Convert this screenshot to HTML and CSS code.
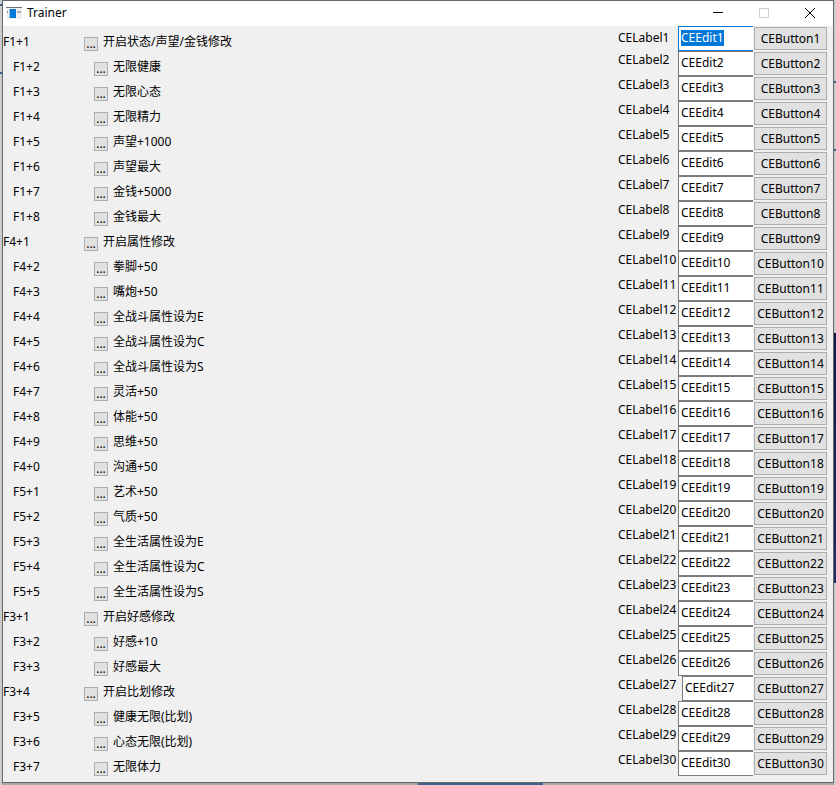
FILE: index.html
```html
<!DOCTYPE html>
<html lang="zh-CN">
<head>
  <meta charset="UTF-8" />
  <meta name="viewport" content="width=device-width, initial-scale=1.0"/>
  <title>Trainer</title>

  <link rel="stylesheet" href="styles.css">
</head>
<body>
  <main class="window">
    <header class="title-bar">
      <svg class="app-icon" width="16" height="12" viewBox="0 0 16 12" aria-hidden="true">
        <rect width="16" height="12" fill="#f0f0f0"/>
        <rect width="16" height="1" fill="#707070"/>
        <rect x="1" y="4" width="1" height="2" fill="#909090"/>
        <rect x="4" y="2" width="6" height="9" fill="#0078d7"/>
        <rect x="3" y="2" width="1" height="9" fill="#8cc4f0"/>
        <rect x="11" y="4" width="4" height="2" fill="#b0b0b0"/>
      </svg>
      <h1>Trainer</h1>
      <div class="window-buttons">
        <button type="button" aria-label="Minimize">
          <svg width="10" height="10" viewBox="0 0 10 10"><path d="M0 4.5H10" stroke="#000"/></svg>
        </button>
        <button type="button" aria-label="Maximize" disabled>
          <svg width="10" height="10" viewBox="0 0 10 10"><path d="M.5 .5H9.5V9.5H.5Z" fill="none" stroke="#ccc"/></svg>
        </button>
        <button type="button" aria-label="Close">
          <svg width="10" height="10" viewBox="0 0 10 10"><path d="M0 0L10 10M10 0L0 10" stroke="#000"/></svg>
        </button>
      </div>
    </header>

    <div class="content">
      <ul class="cheats" id="cheats"></ul>
      <div class="controls" id="controls"></div>
    </div>
  </main>

  <script>
    const groups = [
      {
        key: "F1+1",
        name: "开启状态/声望/金钱修改",
        items: [
          ["F1+2", "无限健康"],
          ["F1+3", "无限心态"],
          ["F1+4", "无限精力"],
          ["F1+5", "声望+1000"],
          ["F1+6", "声望最大"],
          ["F1+7", "金钱+5000"],
          ["F1+8", "金钱最大"]
        ]
      },
      {
        key: "F4+1",
        name: "开启属性修改",
        items: [
          ["F4+2", "拳脚+50"],
          ["F4+3", "嘴炮+50"],
          ["F4+4", "全战斗属性设为E"],
          ["F4+5", "全战斗属性设为C"],
          ["F4+6", "全战斗属性设为S"],
          ["F4+7", "灵活+50"],
          ["F4+8", "体能+50"],
          ["F4+9", "思维+50"],
          ["F4+0", "沟通+50"],
          ["F5+1", "艺术+50"],
          ["F5+2", "气质+50"],
          ["F5+3", "全生活属性设为E"],
          ["F5+4", "全生活属性设为C"],
          ["F5+5", "全生活属性设为S"]
        ]
      },
      {
        key: "F3+1",
        name: "开启好感修改",
        items: [
          ["F3+2", "好感+10"],
          ["F3+3", "好感最大"]
        ]
      },
      {
        key: "F3+4",
        name: "开启比划修改",
        items: [
          ["F3+5", "健康无限(比划)"],
          ["F3+6", "心态无限(比划)"],
          ["F3+7", "无限体力"]
        ]
      }
    ];

    function addCheat(key, name, className) {
      const row = document.createElement("li");
      row.className = className;
      row.innerHTML = `
        <span class="hotkey">${key}</span>
        <button type="button" class="more" aria-label="${name}">...</button>
        <span class="name">${name}</span>
      `;
      document.getElementById("cheats").appendChild(row);
    }

    groups.forEach(group => {
      addCheat(group.key, group.name, "cheat");
      group.items.forEach(([key, name]) => addCheat(key, name, "cheat child"));
    });

    for (let i = 1; i <= 30; i++) {
      const row = document.createElement("div");
      row.className = "control";
      row.innerHTML = `
        <label for="edit${i}">CELabel${i}</label>
        <input type="text" id="edit${i}" value="CEEdit${i}" class="${i === 27 ? "edit narrow" : "edit"}" />
        <button type="button">CEButton${i}</button>
      `;
      document.getElementById("controls").appendChild(row);
    }

    // First field starts focused with its text selected
    const first = document.getElementById("edit1");
    first.focus();
    first.select();
  </script>
</body>
</html>
```
FILE: styles.css
```css
* {
  box-sizing: border-box;
}

body {
  margin: 0;
  min-height: 100vh;
  padding: 0 2px 2px;
  display: flex;
  color: #000;
  font-family: "Noto Sans", "Noto Sans CJK SC", sans-serif;
  font-size: 12px;
  line-height: 16px;
  background:
    linear-gradient(#36648f, #36648f) 418px 100% / 125px 2px no-repeat,
    linear-gradient(#ccc 81px, #36648f 81px, #36648f 83px, #ccc 83px, #ccc 149px, #36648f 149px, #36648f 151px, #ccc 151px, #ccc 333px, #10184a 333px, #1c2c6c 583px, #ccc 583px) 100% 0 / 2px 100% no-repeat,
    linear-gradient(#ccc 4px, #36648f 4px, #36648f 6px, #ccc 6px, #ccc 72px, #36648f 72px, #36648f 74px, #ccc 74px) 0 0 / 2px 100% no-repeat,
    #a8a8a8;
}

button,
input {
  margin: 0;
  font: inherit;
  color: inherit;
}

.window {
  flex: 1;
  display: flex;
  flex-direction: column;
  border: 1px solid #686868;
  background: #f0f0f0;
}

.title-bar {
  display: flex;
  align-items: center;
  height: 25px;
  padding: 0 0 1px 3px;
  background: #fff;
}

.title-bar h1 {
  flex: 1;
  margin: 0 0 0 5px;
  font-size: 12px;
  font-weight: normal;
}

.window-buttons {
  display: flex;
}

.window-buttons button {
  width: 46px;
  height: 24px;
  padding: 0;
  border: 0;
  background: none;
}

.window-buttons svg {
  display: block;
  margin: 0 auto;
}

.content {
  flex: 1;
  display: flex;
  justify-content: space-between;
  padding-right: 6px;
}

.cheats {
  margin: 0;
  padding: 3px 0 0;
  list-style: none;
}

.cheat {
  display: flex;
  align-items: center;
  height: 25px;
}

.child {
  padding-left: 10px;
}

.hotkey {
  width: 81px;
}

.more {
  width: 14px;
  height: 14px;
  margin: 4px 5px 0 0;
  padding: 0;
  border: 1px solid #adadad;
  background: #e1e1e1;
  line-height: 10px;
}

.control {
  display: grid;
  grid-template-columns: 60px 75px 74px;
  height: 25px;
}

.control label {
  padding-top: 1px;
  white-space: nowrap;
}

.control:first-child label {
  padding-top: 4px;
}

.edit {
  width: 100%;
  min-width: 0;
  padding: 0 2px 1px;
  border: 1px solid #7a7a7a;
  border-right: 0;
  border-radius: 0;
  outline: 0;
  background: #fff;
}

.narrow {
  width: auto;
  margin-left: 4px;
}

.edit:focus {
  border-color: #0078d7;
}

.edit::selection {
  color: #fff;
  background: #0078d7;
}

.control button {
  margin: 1px 0 1px 1px;
  padding: 0;
  border: 1px solid #adadad;
  background: #e1e1e1;
  white-space: nowrap;
}
```
